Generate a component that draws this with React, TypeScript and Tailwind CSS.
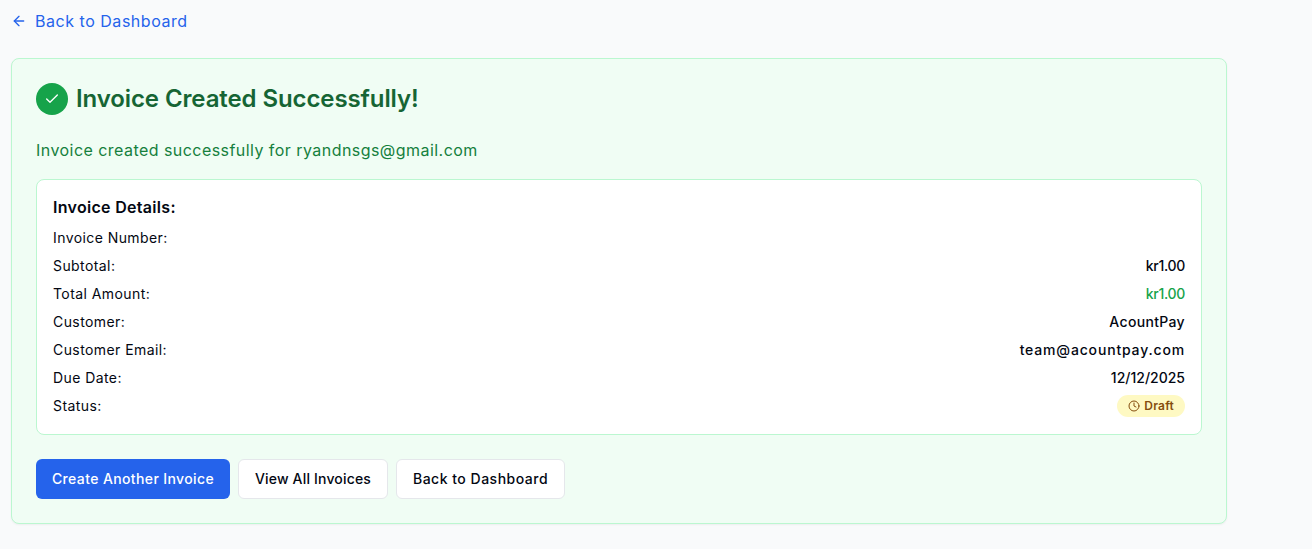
import { ArrowLeft, Check, Clock } from 'lucide-react';

const font = { fontFamily: 'Inter, "Noto Sans", sans-serif' };

const rows = [
    { label: 'Invoice Number:', value: '', tracking: '' },
    { label: 'Subtotal:', value: 'kr1.00', tracking: 'tracking-[-0.3px]' },
    { label: 'Total Amount:', value: 'kr1.00', tracking: 'tracking-[-0.3px]', green: true },
    { label: 'Customer:', value: 'AcountPay', tracking: 'tracking-[0.33px]' },
    { label: 'Customer Email:', value: 'team@acountpay.com', tracking: 'tracking-[0.83px]' },
    { label: 'Due Date:', value: '12/12/2025', tracking: '' },
];

function Row({ label, children }: { label: string; children?: React.ReactNode }) {
    return (
        <div className="flex h-7 items-center justify-between text-sm text-[#030712]">
            <span className="tracking-[0.42px]">{label}</span>
            {children}
        </div>
    );
}

export default function App() {
    return (
        <div className="min-h-[549px] bg-[#f9fafb] pl-[11px] pt-[10px]" style={font}>
            <a className="flex h-[22px] items-center gap-2 text-base tracking-[0.53px] text-[#2563eb]">
                <ArrowLeft size={16} />
                <span>Back to Dashboard</span>
            </a>

            <div className="mt-[26px] h-[466px] w-[1216px] rounded-lg border border-[#bbf7d0] bg-[#f0fdf4] p-6 shadow-xs">
                <div className="flex items-center gap-2">
                    <div className="flex h-8 w-8 items-center justify-center rounded-full bg-[#16a34a] text-white">
                        <Check size={16} />
                    </div>
                    <h1 className="text-2xl font-semibold tracking-[-0.1px] text-[#166534]">Invoice Created Successfully!</h1>
                </div>

                <p className="mt-[23px] text-base tracking-[0.45px] text-[#15803d]">Invoice created successfully for ryandnsgs@gmail.com</p>

                <div className="mt-[17px] h-[256px] rounded-lg border border-[#bbf7d0] bg-white px-4 pt-[15px]">
                    <h3 className="mb-[5px] text-base font-semibold tracking-[0.3px] text-[#030712]">Invoice Details:</h3>
                    {rows.map((row) => (
                        <Row key={row.label} label={row.label}>
                            <span className={`${row.green ? 'text-[#16a34a]' : ''} ${row.tracking} font-medium`}>{row.value}</span>
                        </Row>
                    ))}
                    <Row label="Status:">
                        <span className="flex h-[22px] items-center gap-1 rounded-full bg-[#fef9c3] px-[11px] text-xs font-semibold tracking-[0.2px] text-[#854d0e]">
                            <Clock size={12} />
                            Draft
                        </span>
                    </Row>
                </div>

                <div className="mt-6 flex gap-2">
                    <button className="h-10 w-[194px] rounded-md bg-[#2563eb] text-sm font-medium tracking-[0.38px] text-white">Create Another Invoice</button>
                    <button className="h-10 w-[150px] rounded-md border border-[#e5e7eb] bg-white text-sm font-medium tracking-[0.18px] text-[#030712]">View All Invoices</button>
                    <button className="h-10 w-[169px] rounded-md border border-[#e5e7eb] bg-white text-sm font-medium tracking-[0.5px] text-[#030712]">Back to Dashboard</button>
                </div>
            </div>
        </div>
    );
}
